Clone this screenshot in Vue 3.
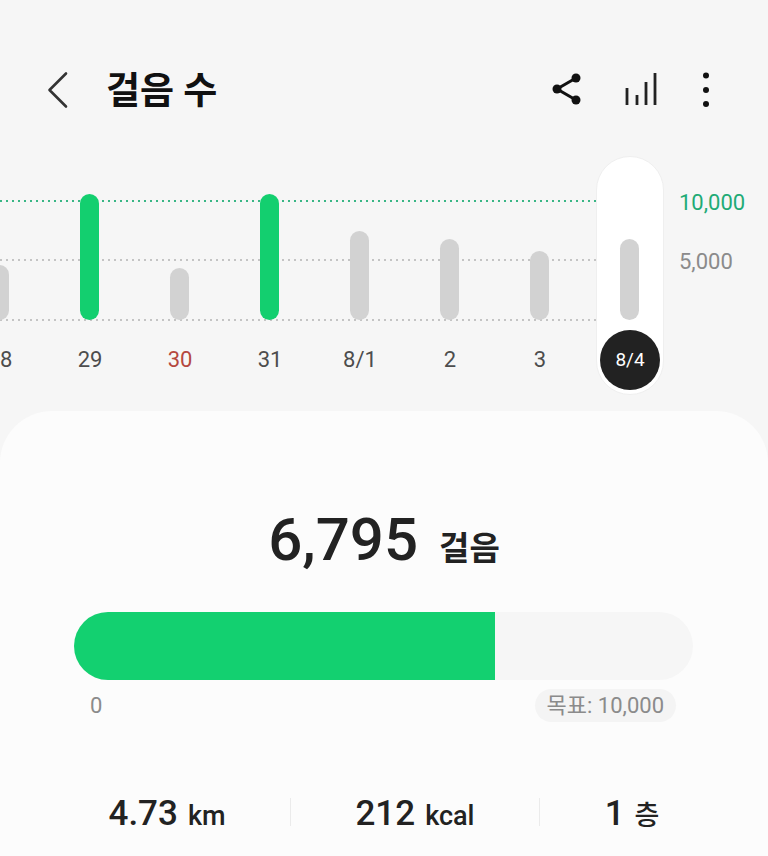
<script setup>
const days = [
  { label: '28', height: 55 },
  { label: '29', height: 126, hit: true },
  { label: '30', height: 52, sunday: true },
  { label: '31', height: 126, hit: true },
  { label: '8/1', height: 89 },
  { label: '2', height: 81 },
  { label: '3', height: 69 },
  { label: '8/4', height: 81, selected: true },
]

const stats = [
  { value: '4.73', unit: 'km' },
  { value: '212', unit: 'kcal' },
  { value: '1', unit: '층' },
]
</script>

<template>
  <div class="screen">
    <header class="topbar">
      <svg class="back" width="24" height="38" viewBox="0 0 24 38">
        <path d="M20 2.5 3.5 19 20 35.5" />
      </svg>
      <h1 class="title">걸음 수</h1>
      <div class="actions">
        <svg width="32" height="36" viewBox="0 0 32 36">
          <path d="M25 6 6 17l19 11" fill="none" stroke="#111" stroke-width="3" />
          <circle cx="25" cy="6" r="4.5" fill="#111" />
          <circle cx="6" cy="17" r="4.5" fill="#111" />
          <circle cx="25" cy="28" r="4.5" fill="#111" />
        </svg>
        <svg width="34" height="36" viewBox="0 0 34 36">
          <path d="M2 16v17M12 23v10M21 10v23M30 1v32" fill="none" stroke="#222" stroke-width="2.8" />
        </svg>
        <svg width="10" height="36" viewBox="0 0 10 36">
          <circle cx="5" cy="3.5" r="3" fill="#111" />
          <circle cx="5" cy="18" r="3" fill="#111" />
          <circle cx="5" cy="32" r="3" fill="#111" />
        </svg>
      </div>
    </header>

    <section class="chart">
      <div class="gridline goal"></div>
      <div class="gridline half"></div>
      <div class="gridline base"></div>
      <span class="axis goal-label">10,000</span>
      <span class="axis half-label">5,000</span>

      <div class="columns">
        <div v-for="day in days" :key="day.label" class="column" :class="{ selected: day.selected }">
          <div class="plot">
            <div class="bar" :class="{ hit: day.hit }" :style="{ height: day.height + 'px' }"></div>
          </div>
          <div class="day" :class="{ sunday: day.sunday }">{{ day.label }}</div>
        </div>
      </div>
    </section>

    <section class="card">
      <div class="total">
        <span class="total-value">6,795</span>
        <span class="total-unit">걸음</span>
      </div>

      <div class="track">
        <div class="fill" :style="{ width: '67.95%' }"></div>
      </div>

      <div class="scale">
        <span class="zero">0</span>
        <span class="target">목표: 10,000</span>
      </div>

      <div class="stats">
        <div v-for="item in stats" :key="item.unit" class="stat">
          <span class="stat-value">{{ item.value }}</span>
          <span class="stat-unit">{{ item.unit }}</span>
        </div>
      </div>
    </section>
  </div>
</template>

<style>
html,
body {
  margin: 0;
  background: #f6f6f6;
}
</style>

<style scoped>
.screen {
  width: 768px;
  height: 856px;
  overflow: hidden;
  background: #f6f6f6;
  font-family: Roboto, "Noto Sans CJK KR", sans-serif;
  color: #222;
}

.topbar {
  display: flex;
  align-items: center;
  height: 38px;
  padding: 71px 0 0 46px;
}

.back path {
  fill: none;
  stroke: #333;
  stroke-width: 2.6;
  stroke-linecap: round;
  stroke-linejoin: round;
}

.title {
  margin: 3px 0 0 36px;
  font-size: 37px;
  font-weight: 700;
  line-height: 38px;
  color: #111;
}

.actions {
  display: flex;
  align-items: center;
  margin-left: auto;
  padding-right: 57px;
  gap: 42px;
}

.chart {
  position: relative;
  height: 302px;
}

.gridline {
  position: absolute;
  left: 0;
  width: 596px;
  height: 2px;
  background: repeating-linear-gradient(90deg, #c4c4c4 0 2px, transparent 2px 6px);
}

.gridline.goal {
  top: 91px;
  background: repeating-linear-gradient(90deg, #39b685 0 2px, transparent 2px 6px);
}

.gridline.half {
  top: 150px;
}

.gridline.base {
  top: 210px;
}

.axis {
  position: absolute;
  left: 679px;
  font-size: 22px;
  line-height: 26px;
  color: #8b8b8b;
}

.goal-label {
  top: 81px;
  color: #1fab76;
}

.half-label {
  top: 140px;
}

.columns {
  position: absolute;
  top: 47px;
  left: -46px;
  display: flex;
}

.column {
  position: relative;
  width: 90px;
}

.plot {
  position: relative;
  z-index: 1;
  display: flex;
  align-items: flex-end;
  justify-content: center;
  height: 164px;
}

.bar {
  width: 19px;
  border-radius: 10px;
  background: #d2d2d2;
}

.bar.hit {
  background: #13cf6f;
}

.day {
  position: relative;
  left: 1px;
  margin-top: 25px;
  font-size: 22px;
  line-height: 30px;
  text-align: center;
  color: #4d4d4d;
}

.day.sunday {
  color: #b5483f;
}

.column.selected::before {
  content: '';
  position: absolute;
  top: 0;
  left: 12px;
  width: 68px;
  height: 239px;
  box-sizing: border-box;
  border: 1px solid #efefef;
  border-radius: 34px;
  background: #fff;
}

.column.selected .day {
  width: 60px;
  height: 60px;
  margin: 10px 0 0 15px;
  border-radius: 50%;
  background: #222;
  color: #fff;
  font-size: 19px;
  line-height: 60px;
}

.card {
  height: 445px;
  padding: 0 75px;
  border-radius: 52px 52px 0 0;
  background: #fcfcfc;
}

.total {
  display: flex;
  align-items: baseline;
  justify-content: center;
  gap: 21px;
  padding: 91px 0 0;
  height: 76px;
}

.total-value {
  font-size: 60px;
  font-weight: 500;
  line-height: 76px;
}

.total-unit {
  font-size: 33px;
  font-weight: 700;
  line-height: 76px;
}

.track {
  height: 68px;
  width: 619px;
  margin: 34px 0 0 -1px;
  border-radius: 34px;
  background: #f6f6f6;
  overflow: hidden;
}

.fill {
  height: 100%;
  background: #13d070;
}

.scale {
  display: flex;
  align-items: center;
  justify-content: space-between;
  width: 586px;
  margin: 9px 0 0 15px;
  color: #8b8b8b;
  font-size: 22px;
}

.target {
  padding: 4px 12px;
  line-height: 25px;
  border-radius: 17px;
  background: #f4f4f4;
}

.stats {
  display: flex;
  width: 618px;
  margin: 76px 0 0 -1px;
}

.stat {
  display: flex;
  align-items: baseline;
  justify-content: center;
  box-sizing: border-box;
  gap: 10px;
  height: 28px;
  line-height: 32px;
  white-space: nowrap;
}

.stat:nth-child(1) {
  width: 217px;
  padding-right: 30px;
  border-right: 1px solid #ebebeb;
}

.stat:nth-child(2) {
  width: 249px;
  border-right: 1px solid #ebebeb;
}

.stat:nth-child(3) {
  width: 152px;
  padding-left: 32px;
}

.stat-value {
  font-size: 35px;
  font-weight: 500;
}

.stat-unit {
  font-size: 27px;
  font-weight: 500;
}
</style>
